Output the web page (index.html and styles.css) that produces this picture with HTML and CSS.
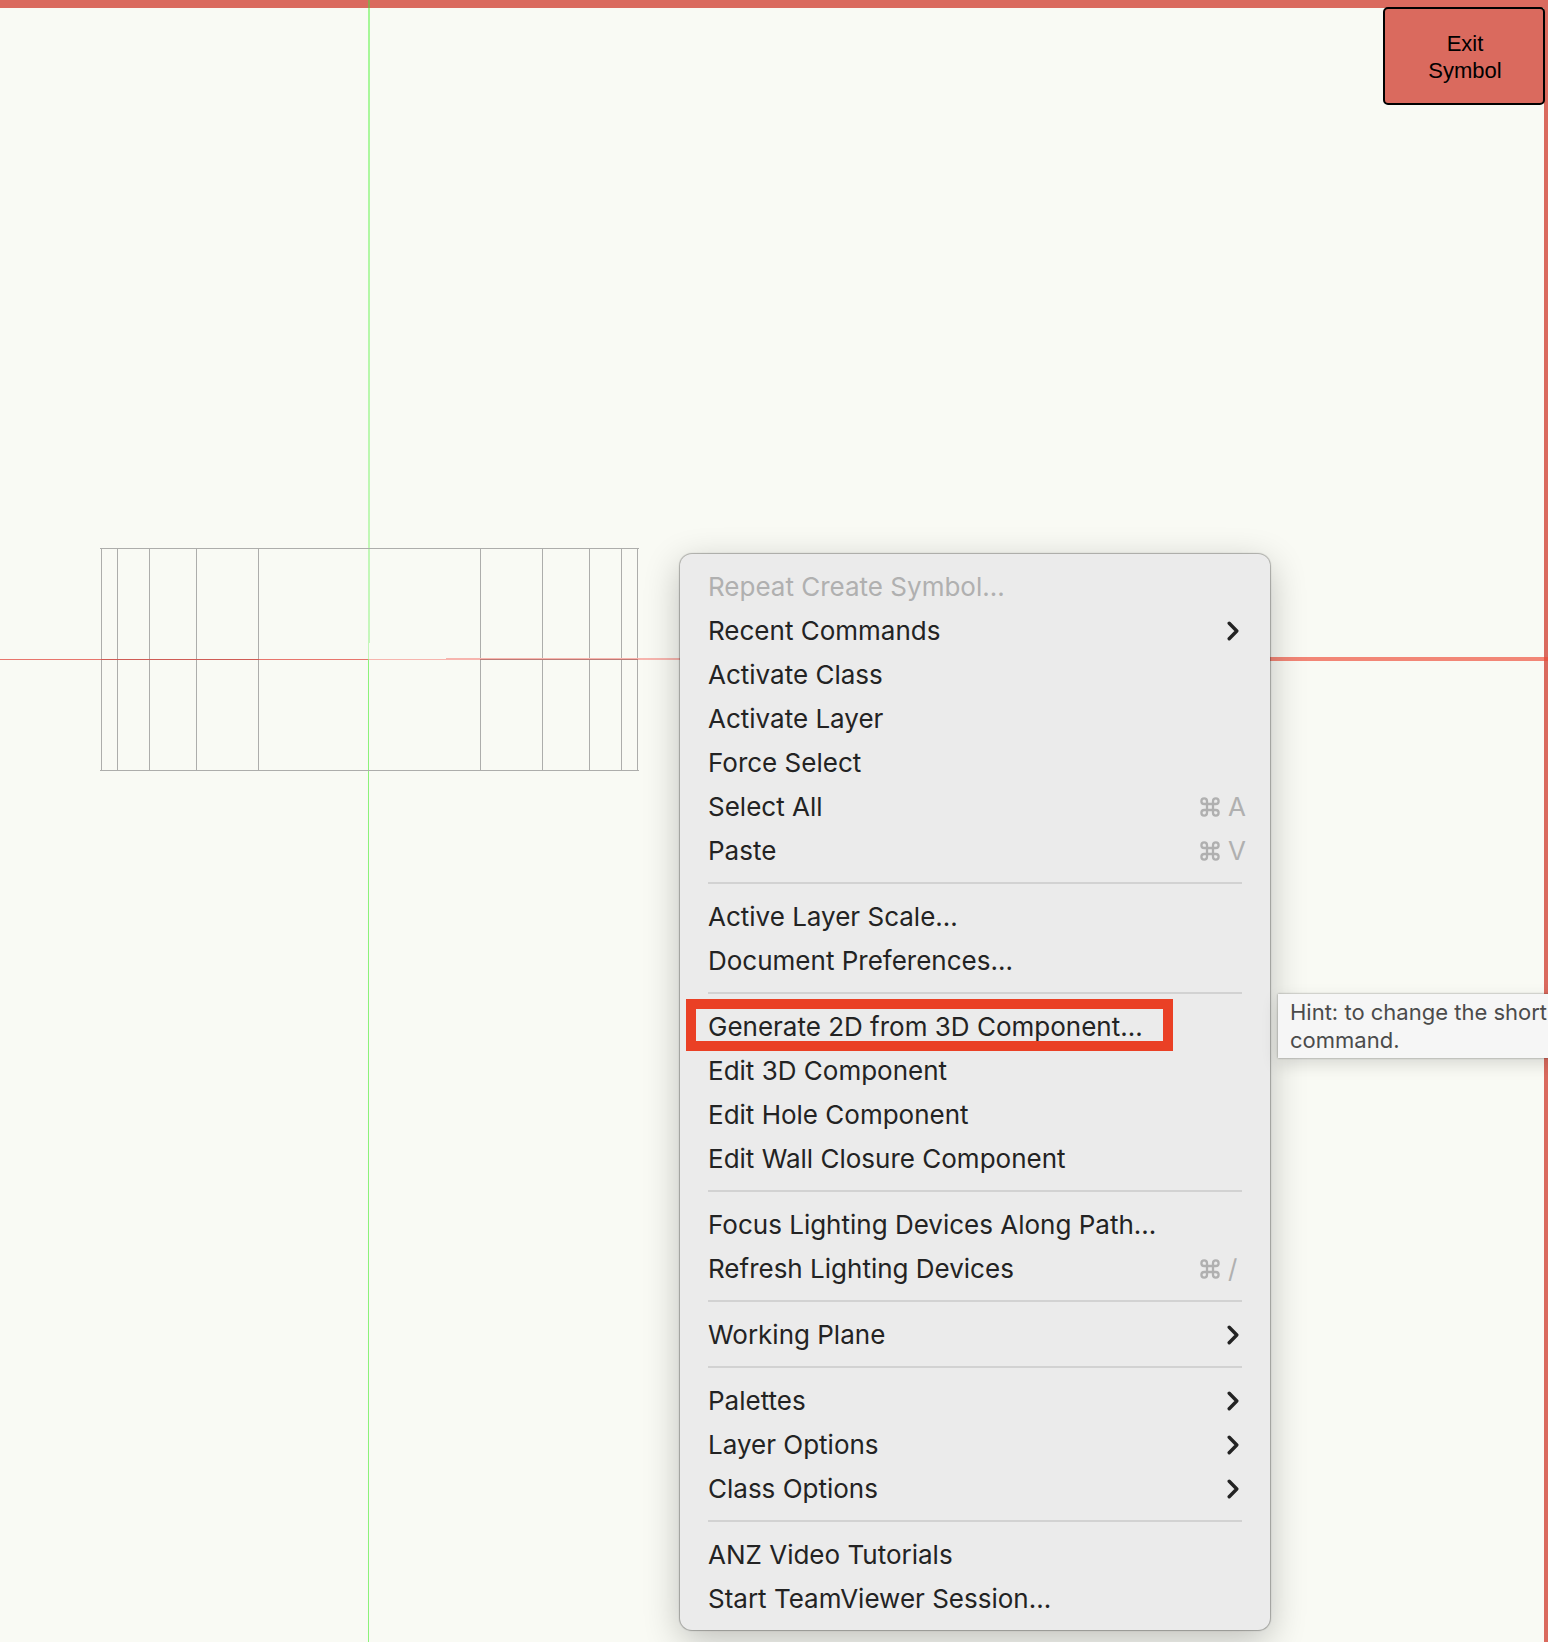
FILE: index.html
```html
<!DOCTYPE html>
<html lang="en">
<head>
<meta charset="utf-8">
<title>Symbol editor</title>
<link rel="stylesheet" href="styles.css">
</head>
<body>
<svg class="defs" aria-hidden="true">
  <symbol id="chevron" viewBox="0 0 12 20"><path d="M2.2 2.2 9.8 10 2.2 17.8"/></symbol>
  <symbol id="command" viewBox="0 0 20 20"><path d="M7 7h6v6H7zM7 7H4.2A2.8 2.8 0 1 1 7 4.2zM13 7V4.2A2.8 2.8 0 1 1 15.8 7zM13 13h2.8a2.8 2.8 0 1 1-2.8 2.8zM7 13v2.8A2.8 2.8 0 1 1 4.2 13z"/></symbol>
</svg>
<main class="workspace">
  <div class="frame"></div>
  <svg class="drawing" role="img" aria-label="Symbol drawing">
    <defs>
      <linearGradient id="fade" x1="0" y1="0" x2="0" y2="1">
        <stop offset="0" stop-color="#a5f796"/>
        <stop offset="1" stop-color="#c6f7bc"/>
      </linearGradient>
    </defs>
    <g class="axis-y">
      <rect x="368" y="0" width="2" height="8" class="overlap"/>
      <rect x="368" y="8" width="2" height="635" fill="url(#fade)"/>
      <rect x="368" y="643" width="1" height="16" class="faint"/>
      <rect x="368" y="659" width="1" height="100%"/>
    </g>
    <g class="outline">
      <path d="M100 548.5H639M100 770.5H639"/>
      <path d="M101.5 548V771M117.5 548V771M149.5 548V771M196.5 548V771M258.5 548V771M480.5 548V771M542.5 548V771M589.5 548V771M621.5 548V771M637.5 548V771"/>
    </g>
    <g class="axis-x">
      <rect x="0" y="659" width="368" height="1"/>
      <rect x="101" y="659" width="158" height="1" class="dark"/>
      <rect x="369" y="659" width="77" height="1" class="faint"/>
      <rect x="446" y="658" width="234" height="2" class="faint"/>
      <rect x="480" y="659" width="158" height="1" class="muted"/>
      <rect x="1270" y="657" width="100%" height="4" class="strong"/>
    </g>
  </svg>
  <button class="exit" type="button">Exit<br>Symbol</button>

  <ul class="menu">
    <li><button type="button" disabled>Repeat Create Symbol...</button></li>
    <li><button type="button">Recent Commands<svg class="chevron"><use href="#chevron"/></svg></button></li>
    <li><button type="button">Activate Class</button></li>
    <li><button type="button">Activate Layer</button></li>
    <li><button type="button">Force Select</button></li>
    <li><button type="button">Select All<span class="keys"><svg class="command"><use href="#command"/></svg>A</span></button></li>
    <li><button type="button">Paste<span class="keys"><svg class="command"><use href="#command"/></svg>V</span></button></li>
    <li class="rule"></li>
    <li><button type="button">Active Layer Scale...</button></li>
    <li><button type="button">Document Preferences...</button></li>
    <li class="rule"></li>
    <li class="marked"><button type="button">Generate 2D from 3D Component...</button></li>
    <li><button type="button">Edit 3D Component</button></li>
    <li><button type="button">Edit Hole Component</button></li>
    <li><button type="button">Edit Wall Closure Component</button></li>
    <li class="rule"></li>
    <li><button type="button">Focus Lighting Devices Along Path...</button></li>
    <li><button type="button">Refresh Lighting Devices<span class="keys"><svg class="command"><use href="#command"/></svg>/</span></button></li>
    <li class="rule"></li>
    <li><button type="button">Working Plane<svg class="chevron"><use href="#chevron"/></svg></button></li>
    <li class="rule"></li>
    <li><button type="button">Palettes<svg class="chevron"><use href="#chevron"/></svg></button></li>
    <li><button type="button">Layer Options<svg class="chevron"><use href="#chevron"/></svg></button></li>
    <li><button type="button">Class Options<svg class="chevron"><use href="#chevron"/></svg></button></li>
    <li class="rule"></li>
    <li><button type="button">ANZ Video Tutorials</button></li>
    <li><button type="button">Start TeamViewer Session...</button></li>
  </ul>
  <div class="hint" role="tooltip">Hint: to change the short<br>command.</div>
</main>
</body>
</html>
```
FILE: styles.css
```css
* { box-sizing: border-box; }
body { margin: 0; font-family: Inter, "Liberation Sans", sans-serif; }
button { font: inherit; color: inherit; }
.defs { position: absolute; width: 0; height: 0; }

.workspace {
  position: relative;
  min-height: 100vh;
  overflow: hidden;
  background: #f9faf4;
}
.frame {
  position: absolute;
  inset: 0;
  border-top: 8px solid #da6a5e;
  border-right: 4px solid #da6a5e;
}
.drawing { position: absolute; inset: 0; width: 100%; height: 100%; }
.outline { stroke: #adadab; fill: none; }
.axis-y { fill: #8cf279; }
.axis-y .faint { fill: #c4f7ba; }
.axis-y .overlap { fill: #90a24c; }
.axis-x { fill: #e8756c; }
.axis-x .dark { fill: #cf5c55; }
.axis-x .faint { fill: #f7b5ae; }
.axis-x .muted { fill: #bd7a76; }
.axis-x .strong { fill: #ee4a35; fill-opacity: 0.66; }

.exit {
  position: absolute;
  top: 7px;
  right: 3px;
  width: 162px;
  height: 98px;
  padding: 2px 0 0 2px;
  border: 2px solid #000;
  border-radius: 5px;
  background: #da6a5e;
  color: #000;
  font: 22px/27px "Liberation Sans", Arial, sans-serif;
}

.menu {
  position: absolute;
  top: 554px;
  left: 680px;
  width: 590px;
  margin: 0;
  padding: 10px 0;
  list-style: none;
  border-radius: 12px;
  background: #ebebeb;
  box-shadow: 0 0 1px 1px rgba(0, 0, 0, 0.28), 0 10px 36px rgba(0, 0, 0, 0.24);
  color: #232323;
  font-size: 26px;
  line-height: 42px;
}
.menu button {
  display: flex;
  align-items: center;
  justify-content: space-between;
  width: 100%;
  height: 44px;
  padding: 2px 24px 0 28px;
  border: 0;
  background: none;
  text-align: left;
  white-space: nowrap;
}
.menu button:disabled { color: #b0b0b0; }
.rule { height: 22px; padding: 10px 28px; }
.rule::before { content: ""; display: block; height: 2px; background: #d2d2d2; }
.chevron {
  width: 12px;
  height: 20px;
  margin-right: 7px;
  fill: none;
  stroke: #232323;
  stroke-width: 3.4;
  stroke-linecap: round;
  stroke-linejoin: round;
}
.keys { display: flex; align-items: center; gap: 8px; width: 46px; color: #b0b0b0; }
.command { flex: none; width: 20px; height: 20px; fill: none; stroke: currentColor; stroke-width: 2.3; }
.marked { position: relative; }
.marked::after {
  content: "";
  position: absolute;
  inset: -5px 97px -3px 6px;
  border: 10px solid #ea4025;
  pointer-events: none;
}

.hint {
  position: absolute;
  top: 994px;
  left: 1278px;
  padding: 4px 12px;
  background: #f6f6f6;
  box-shadow: 0 0 2px rgba(0, 0, 0, 0.4), 0 6px 16px rgba(0, 0, 0, 0.14);
  color: #4b4b4b;
  font-size: 22px;
  line-height: 28px;
  white-space: nowrap;
}
```
